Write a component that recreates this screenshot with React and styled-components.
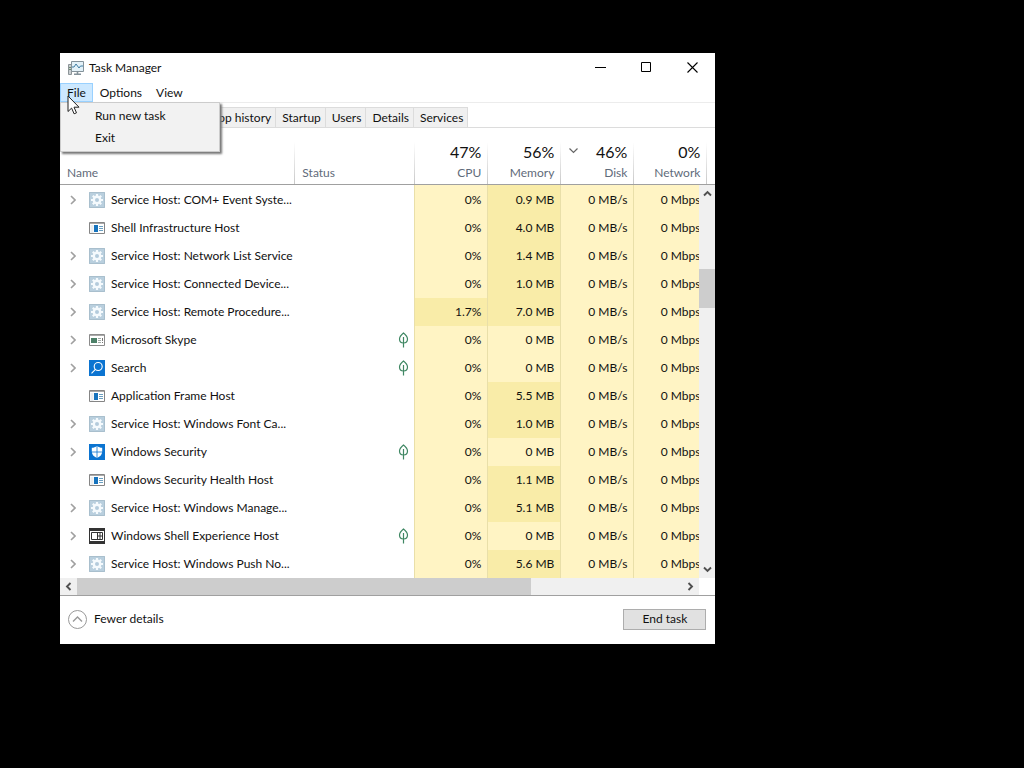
import {useState} from 'react';
import styled, {createGlobalStyle} from 'styled-components';

const processes = [
	{name: 'Service Host: COM+ Event Syste...', icon: 'service', group: true, cpu: '0%', memory: '0.9 MB'},
	{name: 'Shell Infrastructure Host', icon: 'app', cpu: '0%', memory: '4.0 MB'},
	{name: 'Service Host: Network List Service', icon: 'service', group: true, cpu: '0%', memory: '1.4 MB'},
	{name: 'Service Host: Connected Device...', icon: 'service', group: true, cpu: '0%', memory: '1.0 MB'},
	{name: 'Service Host: Remote Procedure...', icon: 'service', group: true, cpu: '1.7%', memory: '7.0 MB'},
	{name: 'Microsoft Skype', icon: 'skype', group: true, suspended: true, cpu: '0%', memory: '0 MB'},
	{name: 'Search', icon: 'search', group: true, suspended: true, cpu: '0%', memory: '0 MB'},
	{name: 'Application Frame Host', icon: 'app', cpu: '0%', memory: '5.5 MB'},
	{name: 'Service Host: Windows Font Ca...', icon: 'service', group: true, cpu: '0%', memory: '1.0 MB'},
	{name: 'Windows Security', icon: 'shield', group: true, suspended: true, cpu: '0%', memory: '0 MB'},
	{name: 'Windows Security Health Host', icon: 'app', cpu: '0%', memory: '1.1 MB'},
	{name: 'Service Host: Windows Manage...', icon: 'service', group: true, cpu: '0%', memory: '5.1 MB'},
	{name: 'Windows Shell Experience Host', icon: 'shell', group: true, suspended: true, cpu: '0%', memory: '0 MB'},
	{name: 'Service Host: Windows Push No...', icon: 'service', group: true, cpu: '0%', memory: '5.6 MB'},
];

const usage = [
	{label: 'CPU', total: '47%'},
	{label: 'Memory', total: '56%'},
	{label: 'Disk', total: '46%', sorted: true},
	{label: 'Network', total: '0%'},
];

const tabs = ['Processes', 'Performance', 'App history', 'Startup', 'Users', 'Details', 'Services'];

const icons = {
	service: ServiceIcon,
	app: AppIcon,
	skype: SkypeIcon,
	search: SearchIcon,
	shield: ShieldIcon,
	shell: ShellIcon,
};

export default function App() {
	const [menuOpen, setMenuOpen] = useState(true);
	const [activeTab, setActiveTab] = useState('Processes');

	return (
		<>
			<GlobalStyle />
			<Desktop>
				<Window>
					<TitleBar>
						<TaskManagerIcon />
						<Title>Task Manager</Title>
						<CaptionButton aria-label="Minimize">
							<svg width="11" height="11" stroke="#000"><path d="M0 5.5h11" /></svg>
						</CaptionButton>
						<CaptionButton aria-label="Maximize">
							<svg width="11" height="11" fill="none" stroke="#000"><path d="M.5.5h9v9h-9z" /></svg>
						</CaptionButton>
						<CaptionButton aria-label="Close">
							<svg width="11" height="11" stroke="#000" strokeWidth="1.1"><path d="M.5.5l10 10M10.5.5l-10 10" /></svg>
						</CaptionButton>
					</TitleBar>

					<MenuBar>
						<MenuButton $open={menuOpen} aria-expanded={menuOpen} onClick={() => setMenuOpen(!menuOpen)}>
							File
						</MenuButton>
						<MenuButton>Options</MenuButton>
						<MenuButton>View</MenuButton>
						{menuOpen && (
							<Menu>
								<MenuItem>Run new task</MenuItem>
								<MenuItem>Exit</MenuItem>
							</Menu>
						)}
						<Pointer width="13" height="20" viewBox="0 0 13 20" aria-hidden="true">
							<path d="M1 1v15.5l3.6-3.4 2.5 5.7 2.4-1-2.5-5.6H12z" fill="#fff" stroke="#222" />
						</Pointer>
					</MenuBar>

					<TabList>
						{tabs.map(tab => (
							<Tab key={tab} $active={tab === activeTab} onClick={() => setActiveTab(tab)}>
								{tab}
							</Tab>
						))}
					</TabList>

					<ListArea>
						<ProcessTable>
							<colgroup>
								<col />
								<Column $width={120} />
								{usage.map(({label}) => (
									<Column key={label} $width={73} />
								))}
								<Column $width={8} />
							</colgroup>
							<thead>
								<tr>
									<Heading>Name</Heading>
									<Heading>Status</Heading>
									{usage.map(({label, total, sorted}) => (
										<Heading key={label} $numeric>
											{sorted && (
												<SortArrow width="9" height="6" fill="none" stroke="#666" strokeWidth="1.2">
													<path d="M.5.5l4 4 4-4" />
												</SortArrow>
											)}
											<Total>{total}</Total>
											{label}
										</Heading>
									))}
									<HeadingEnd />
								</tr>
							</thead>
							<TableBody>
								{processes.map(process => (
									<ProcessRow key={process.name} process={process} />
								))}
							</TableBody>
						</ProcessTable>
						<VerticalScrollbar>
							<ScrollButton aria-label="Scroll up"><Arrow direction="up" /></ScrollButton>
							<VerticalThumb />
							<ScrollButton aria-label="Scroll down"><Arrow direction="down" /></ScrollButton>
						</VerticalScrollbar>
					</ListArea>

					<HorizontalScrollbar>
						<ScrollButton aria-label="Scroll left"><Arrow direction="left" /></ScrollButton>
						<HorizontalTrack><HorizontalThumb /></HorizontalTrack>
						<ScrollButton aria-label="Scroll right"><Arrow direction="right" /></ScrollButton>
					</HorizontalScrollbar>

					<Footer>
						<DetailsButton>
							<svg width="19" height="19" fill="none" stroke="#999">
								<circle cx="9.5" cy="9.5" r="9" />
								<path d="M5 11.5L9.5 7l4.5 4.5" strokeWidth="1.4" />
							</svg>
							Fewer details
						</DetailsButton>
						<EndTaskButton>End task</EndTaskButton>
					</Footer>
				</Window>
			</Desktop>
		</>
	);
}

function ProcessRow({process}) {
	const {name, icon, group, suspended, cpu, memory} = process;
	const Icon = icons[icon];

	return (
		<tr>
			<Cell>
				<NameLayout>
					{group ? (
						<ExpandButton aria-label={`Expand ${name}`}>
							<svg width="6" height="10" fill="none" stroke="#a0a0a0" strokeWidth="1.6">
								<path d="M1 1l4 4-4 4" />
							</svg>
						</ExpandButton>
					) : (
						<span />
					)}
					<Icon />
					<span>{name}</span>
				</NameLayout>
			</Cell>
			<StatusCell>{suspended && <LeafIcon />}</StatusCell>
			<UsageCell $high={cpu !== '0%'}>{cpu}</UsageCell>
			<UsageCell $high={memory !== '0 MB'}>{memory}</UsageCell>
			<UsageCell>0 MB/s</UsageCell>
			<UsageCell>0 Mbps</UsageCell>
		</tr>
	);
}

// #################################
// ########    ICONS     ###########
// #################################

const turns = {up: 0, right: 90, down: 180, left: 270};

function Arrow({direction}) {
	return (
		<svg width="9" height="9" fill="none" stroke="#505050" strokeWidth="1.9">
			<path d="M1 6.5L4.5 3 8 6.5" transform={`rotate(${turns[direction]} 4.5 4.5)`} />
		</svg>
	);
}

function TaskManagerIcon() {
	return (
		<svg width="16" height="16" viewBox="0 0 16 16" fill="none">
			<path d="M.5 4.5h3v10h-3z" fill="#c9ced1" stroke="#8d9599" />
			<path d="M1 7.5h2M1 9.5h2" stroke="#6f8b6f" />
			<path d="M3.5 1.5h12v10h-12z" fill="#e3f1f8" stroke="#84929a" />
			<path d="M4 7h2l2-3 3 4 1.500-2H15" stroke="#3f7da3" />
			<path d="M9.500 12v2M6 14.200h7" stroke="#84929a" strokeWidth="1.6" />
		</svg>
	);
}

function ServiceIcon() {
	return (
		<svg width="16" height="16" viewBox="0 0 16 16">
			<path d="M0 0h16v16H0z" fill="#b9cfde" />
			<path d="M.5.5h15v15H.5z" fill="none" stroke="#a9bfcd" />
			<path d="M8 2v12M2 8h12M3.8 3.8l8.4 8.4M12.2 3.8l-8.4 8.4" stroke="#f5fafd" strokeWidth="2.2" />
			<circle cx="8" cy="8" r="3.2" fill="#b3cbdc" stroke="#f5fafd" strokeWidth="2.4" />
		</svg>
	);
}

function AppIcon() {
	return (
		<svg width="16" height="16" viewBox="0 0 16 16" fill="none">
			<path d="M.5 2.5h15v11H.5z" fill="#fff" stroke="#858585" />
			<path d="M1 3.5h14" stroke="#a9a9a9" />
			<path d="M1.5 5h3v8h-3z" fill="#e9edf0" />
			<path d="M5 5h4v7H5z" fill="#1673bd" />
			<path d="M10 6.5h4M10 8.5h4M10 10.5h4" stroke="#6b9fc0" />
		</svg>
	);
}

function SkypeIcon() {
	return (
		<svg width="16" height="16" viewBox="0 0 16 16" fill="none">
			<path d="M.5 2.5h15v11H.5z" fill="#fff" stroke="#8b8b8b" />
			<path d="M1 3.5h14" stroke="#a9a9a9" />
			<path d="M2 6h6v5H2z" fill="#4c8068" />
			<path d="M9 6.5h3M9 8.5h3M9 10.5h3" stroke="#a0aaa5" />
			<path d="M13.5 6v3M13.5 10v1" stroke="#777" />
		</svg>
	);
}

function SearchIcon() {
	return (
		<svg width="16" height="16" viewBox="0 0 16 16" fill="none">
			<path d="M0 0h16v16H0z" fill="#0b74d1" />
			<circle cx="9.2" cy="6.5" r="4" stroke="#fff" strokeWidth="1.1" />
			<path d="M6.4 9.4L2.5 13.3" stroke="#fff" strokeWidth="1.1" />
		</svg>
	);
}

function ShieldIcon() {
	return (
		<svg width="16" height="16" viewBox="0 0 16 16">
			<path d="M0 0h16v16H0z" fill="#0b74d1" />
			<path d="M8 2c1.5 1.2 3.3 1.7 5.2 1.8v3.7c0 3-2 5.2-5.2 6.5-3.2-1.3-5.2-3.5-5.2-6.5V3.8C4.7 3.7 6.5 3.2 8 2z" fill="#fff" />
			<path d="M8 2v12M2.5 8h11" stroke="#0b74d1" strokeWidth=".8" />
		</svg>
	);
}

function ShellIcon() {
	return (
		<svg width="16" height="16" viewBox="0 0 16 16" fill="none">
			<path d="M.5.5h15v15H.5z" fill="#fff" stroke="#333" />
			<path d="M0 0h16v3H0zM0 13h16v3H0z" fill="#333" />
			<path d="M2.5 4.5h11v7h-11zM8.5 4.5v7M8.5 8h5M11 4.5v7" stroke="#333" />
		</svg>
	);
}

function LeafIcon() {
	return (
		<Leaf width="11" height="16" viewBox="0 0 11 16" fill="none" stroke="#3f8763">
			<path d="M5.5 1C3 3 1.5 4.7 1.5 7s1.7 4 4 4 4-1.7 4-4S8 3 5.5 1zM5.5 5v10.5" strokeWidth="1.2" />
		</Leaf>
	);
}

// #################################
// ########   STYLING    ###########
// #################################

const GlobalStyle = createGlobalStyle`
	* {
		box-sizing: border-box;
	}

	body {
		margin: 0;
		background: #000;
		color: #111;
		font-family: Lato, 'Open Sans', sans-serif;
		font-size: 12px;
		line-height: 16px;
	}

	button {
		padding: 0;
		border: 0;
		background: none;
		color: inherit;
		font: inherit;
		white-space: nowrap;
	}

	svg {
		display: block;
		flex: none;
	}
`;

const Leaf = styled.svg`
	margin-left: auto;
`;

const Desktop = styled.main`
	min-height: 100vh;
	padding: 53px 60px;
`;

const Window = styled.section`
	width: 64vw;
	min-width: 600px;
	background: #fff;
`;

const TitleBar = styled.header`
	display: flex;
	align-items: center;
	height: 30px;
	padding-left: 8px;
`;

const Title = styled.h1`
	flex: 1;
	margin: 0;
	padding-left: 5px;
	font-size: 12px;
	font-weight: 400;
`;

const CaptionButton = styled.button`
	display: grid;
	place-items: center;
	align-self: flex-start;
	width: 46px;
	height: 28px;
`;

const MenuBar = styled.nav`
	position: relative;
	display: flex;
	height: 20px;
	border-bottom: 1px solid #ececec;
`;

const MenuButton = styled.button`
	padding: 0 7px;
	background: ${props => (props.$open ? '#cce8ff' : 'transparent')};
	box-shadow: ${props => (props.$open ? 'inset 0 0 0 1px #99d1ff' : 'none')};
`;

const Menu = styled.div`
	position: absolute;
	z-index: 2;
	top: 19px;
	left: 0;
	display: grid;
	min-width: 160px;
	padding: 2px;
	border: 1px solid #ccc;
	background: #f2f2f2;
	box-shadow: 2px 2px 2px #777;
`;

const MenuItem = styled.button`
	height: 22px;
	padding-left: 32px;
	text-align: left;
`;

const Pointer = styled.svg`
	position: absolute;
	z-index: 3;
	top: 12px;
	left: 7px;
`;

const TabList = styled.div`
	display: flex;
	height: 25px;
	padding: 4px 3px 0;
	border-bottom: 1px solid #dcdcdc;
`;

const Tab = styled.button`
	padding: 0 4px 0 6px;
	border: 1px solid #dcdcdc;
	border-width: 1px 1px 0 0;
	background: ${props => (props.$active ? '#fff' : '#f0f0f0')};
`;

const ListArea = styled.div`
	position: relative;
	overflow: hidden;
`;

const ProcessTable = styled.table`
	width: 100%;
	table-layout: fixed;
	border-collapse: separate;
	border-spacing: 0;
`;

const Column = styled.col`
	width: ${props => props.$width}px;
`;

const Heading = styled.th`
	position: relative;
	height: 57px;
	padding: 0 7px 3px;
	border-bottom: 1px solid #a0a0a0;
	background: linear-gradient(#fff 25%, #c8c8c8) right / 1px 100% no-repeat;
	color: #5f6b7a;
	font-weight: 400;
	text-align: ${props => (props.$numeric ? 'right' : 'left')};
	vertical-align: bottom;
`;

const HeadingEnd = styled.td`
	border-bottom: 1px solid #a0a0a0;
`;

const Total = styled.div`
	padding-bottom: 3px;
	color: #111;
	font-size: 16px;
	line-height: 20px;
`;

const SortArrow = styled.svg`
	position: absolute;
	top: 20px;
	left: 8px;
`;

const TableBody = styled.tbody`
	tr:first-child td {
		height: 29px;
		padding-top: 1px;
	}
`;

const Cell = styled.td`
	height: 28px;
	padding: 0;
	white-space: nowrap;
`;

const NameLayout = styled.div`
	display: grid;
	grid-template-columns: 23px 16px 1fr;
	align-items: center;
	column-gap: 6px;
`;

const ExpandButton = styled.button`
	display: grid;
	justify-items: end;
	padding: 4px 7px 4px 0;
`;

const StatusCell = styled(Cell)`
	padding-right: 5px;
	border-right: 1px solid #e9dfa9;
`;

const UsageCell = styled(Cell)`
	padding-right: 6px;
	border-right: 1px solid #e9dfa9;
	background: ${props => (props.$high ? '#f9eca8' : '#fff4c4')};
	text-align: right;
`;

const VerticalScrollbar = styled.div`
	position: absolute;
	top: 57px;
	right: 0;
	bottom: 0;
	display: grid;
	grid-template-rows: 17px 1fr 17px;
	width: 16px;
	background: #f0f0f0;
`;

const HorizontalScrollbar = styled.div`
	display: grid;
	grid-template-columns: 17px 1fr 17px;
	height: 17px;
	margin-right: 16px;
	background: #f0f0f0;
`;

const ScrollButton = styled.button`
	display: grid;
	place-items: center;
`;

const VerticalThumb = styled.div`
	height: 11%;
	margin-top: 67px;
	background: #cdcdcd;
`;

const HorizontalTrack = styled.div`
	display: grid;
`;

const HorizontalThumb = styled.div`
	width: 75%;
	background: #cdcdcd;
`;

const Footer = styled.footer`
	display: flex;
	align-items: center;
	justify-content: space-between;
	height: 49px;
	padding: 0 9px 2px 8px;
	border-top: 1px solid #a0a0a0;
`;

const DetailsButton = styled.button`
	display: flex;
	align-items: center;
	gap: 7px;
`;

const EndTaskButton = styled.button`
	width: 83px;
	height: 21px;
	border: 1px solid #adadad;
	background: #e1e1e1;
`;
